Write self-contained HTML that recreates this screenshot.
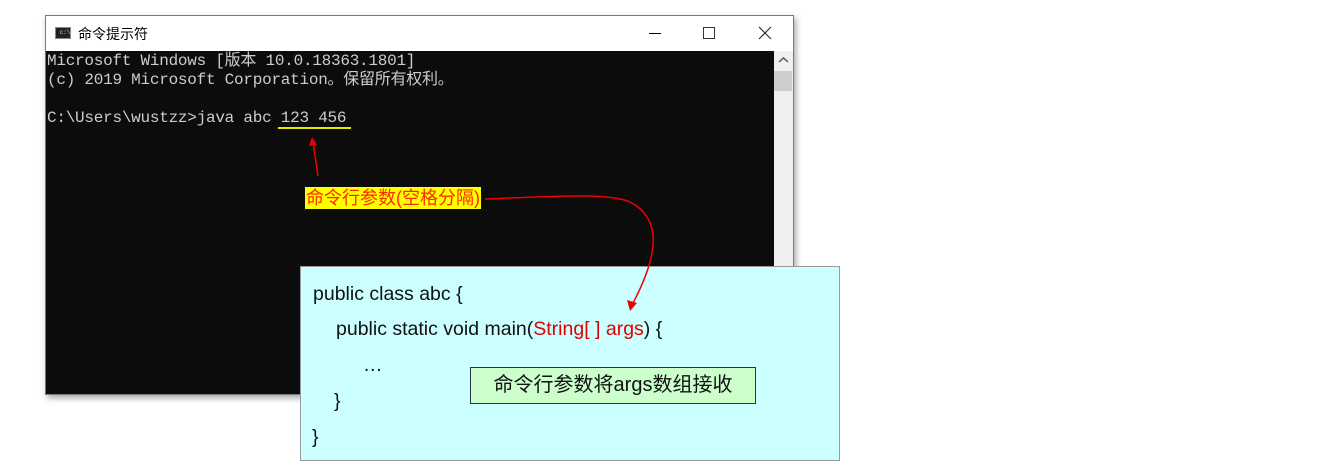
<!DOCTYPE html>
<html><head><meta charset="utf-8"><style>
body{margin:0;width:1323px;height:472px;background:#fff;position:relative;overflow:hidden;font-family:"Liberation Sans","Noto Sans CJK SC",sans-serif}
.win{position:absolute;left:45px;top:15px;width:747px;height:378px;border:1px solid #7a7a7a;background:#fff;box-shadow:2px 3px 6px rgba(0,0,0,.35)}
.title{position:absolute;left:0;top:0;width:100%;height:35px;background:#fff}
.term{position:absolute;left:0;top:35px;width:728px;height:343px;background:#0c0c0c;color:#cccccc;font-family:"Liberation Mono","Noto Sans CJK SC",monospace;font-size:16px;line-height:19px;white-space:pre;letter-spacing:-0.25px}
.sb{position:absolute;left:728px;top:35px;width:19px;height:343px;background:#f0f0f0}
.code{position:absolute;left:300px;top:266px;width:538px;height:193px;background:#ccffff;border:1px solid #999;font-size:19.5px;color:#111}
.code div{position:absolute;white-space:pre}
.red{color:#e00000}
.g{position:absolute;left:470px;top:367px;width:284px;height:35px;background:#ccffcc;border:1px solid #333;font-size:20px;text-align:center;line-height:35px;color:#111}
</style></head><body>
<div class="win">
 <div class="title">
  <div style="position:absolute;left:9px;top:11px;width:16px;height:12px;background:#222;border:1px solid #888;box-sizing:border-box;color:#ddd;font-size:6px;line-height:10px;font-family:'Liberation Mono',monospace">&nbsp;c:\</div>
  <div style="position:absolute;left:32px;top:8px;font-size:14px;color:#000">命令提示符</div>
  <div style="position:absolute;left:603px;top:17px;width:12px;height:1px;background:#000"></div>
  <div style="position:absolute;left:657px;top:11px;width:10px;height:10px;border:1px solid #333"></div>
  <svg style="position:absolute;left:712px;top:10px" width="14" height="14"><path d="M1 1L13 13M13 1L1 13" stroke="#222" stroke-width="1.1"/></svg>
 </div>
 <div class="term"><div style="position:absolute;left:1px;top:1px">Microsoft Windows [版本 10.0.18363.1801]
(c) 2019 Microsoft Corporation。保留所有权利。

C:\Users\wustzz&gt;java abc 123 456</div>
 <div style="position:absolute;left:232px;top:76px;width:73px;height:2px;background:#e8e800"></div>
 </div>
 <div class="sb"><svg style="position:absolute;left:4px;top:5px" width="11" height="8"><path d="M1 6L5.5 2L10 6" stroke="#555" stroke-width="1.5" fill="none"/></svg><div style="position:absolute;left:0;top:20px;width:18px;height:20px;background:#cdcdcd"></div></div>
</div>
<div style="position:absolute;left:305px;top:187px;height:22px;padding:0 1px;background:#ffff00;color:#ff2a00;font-size:18px;line-height:22px;white-space:nowrap">命令行参数(空格分隔)</div>
<div class="code">
 <div style="left:12px;top:16px">public class abc {</div>
 <div style="left:35px;top:51px">public static void main(<span class="red">String[ ] args</span>) {</div>
 <div style="left:62px;top:87px">…</div>
 <div style="left:33px;top:123px">}</div>
 <div style="left:11px;top:159px">}</div>
</div>
<div class="g">命令行参数将args数组接收</div>
<svg style="position:absolute;left:0;top:0" width="1323" height="472">
 <path d="M318 176L313 142" stroke="#e00" stroke-width="1.5" fill="none"/>
 <path d="M309 146L312 137L317 145Z" fill="#e00"/>
 <path d="M485 199C560 196 610 193 630 202C665 220 656 260 632 305" stroke="#e00" stroke-width="1.5" fill="none"/>
 <path d="M627 300L630 311L637 303Z" fill="#e00"/>
</svg>
</body></html>
